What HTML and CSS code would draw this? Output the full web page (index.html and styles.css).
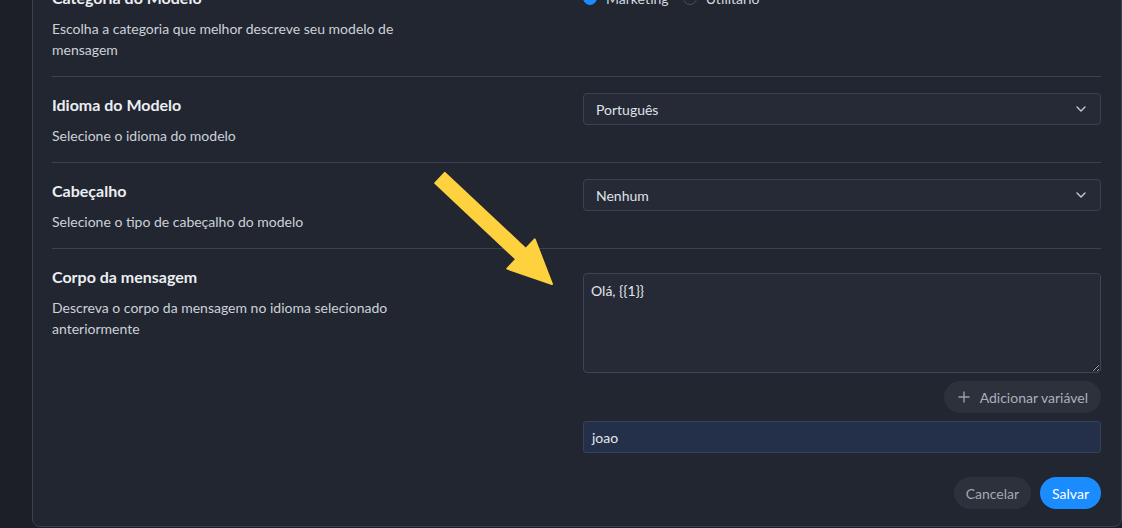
FILE: index.html
```html
<!DOCTYPE html>
<html lang="pt">
<head>
<meta charset="utf-8">
<link rel="stylesheet" href="styles.css">
</head>
<body>
<div class="page">
  <div class="card">
    <div class="row">
      <div class="info">
        <div class="title">Categoria do Modelo</div>
        <div class="desc">Escolha a categoria que melhor descreve seu modelo de mensagem</div>
      </div>
      <div class="field">
        <div class="radios">
          <label class="radio"><span class="dot checked"></span>Marketing</label>
          <label class="radio"><span class="dot"></span>Utilitário</label>
        </div>
      </div>
    </div>
    <div class="row">
      <div class="info">
        <div class="title">Idioma do Modelo</div>
        <div class="desc">Selecione o idioma do modelo</div>
      </div>
      <div class="field">
        <div class="select">Português
          <svg class="chev" width="10" height="6" viewBox="0 0 10 6"><path d="M1 1l4 4 4-4" fill="none" stroke="#c5c9d1" stroke-width="1.4" stroke-linecap="round" stroke-linejoin="round"/></svg>
        </div>
      </div>
    </div>
    <div class="row">
      <div class="info">
        <div class="title">Cabeçalho</div>
        <div class="desc">Selecione o tipo de cabeçalho do modelo</div>
      </div>
      <div class="field">
        <div class="select">Nenhum
          <svg class="chev" width="10" height="6" viewBox="0 0 10 6"><path d="M1 1l4 4 4-4" fill="none" stroke="#c5c9d1" stroke-width="1.4" stroke-linecap="round" stroke-linejoin="round"/></svg>
        </div>
      </div>
    </div>
    <div class="row last">
      <div class="info">
        <div class="title">Corpo da mensagem</div>
        <div class="desc">Descreva o corpo da mensagem no idioma selecionado anteriormente</div>
      </div>
      <div class="field body-field">
        <textarea class="textarea" readonly>Olá, {{1}}</textarea>
        <div class="add-row">
          <button class="pill add"><svg width="12" height="12" viewBox="0 0 12 12"><path d="M6 0.5v11M0.5 6h11" stroke="#9aa0ab" stroke-width="1.4"/></svg>Adicionar variável</button>
        </div>
        <div class="input">joao</div>
      </div>
    </div>
    <div class="actions">
      <button class="pill cancel">Cancelar</button>
      <button class="pill save">Salvar</button>
    </div>
  </div>
  <svg class="arrow" width="1122" height="528" viewBox="0 0 1122 528">
    <polygon points="444.8,172.9 525.8,248.9 534.7,239.4 552,284 507.3,268.6 516.2,259.1 435.2,183.1" fill="#fdd23e" stroke="#fdd23e" stroke-width="2" stroke-linejoin="round"/>
  </svg>
</div>
</body>
</html>
```
FILE: styles.css
```css
html, body {
  margin: 0;
  padding: 0;
  background: #1c1f26;
  overflow: hidden;
  height: 528px;
}
body {
  font-family: Lato, "Noto Sans", sans-serif;
  color: #e6e8ec;
}
.page {
  position: relative;
  display: flow-root;
  padding-left: 32px;
  height: 528px;
}
.card {
  margin-top: -39px;
  background: #212631;
  border: 1px solid #3a404d;
  border-radius: 8px;
  padding: 24px 20px 17px 19px;
}
.row {
  display: grid;
  grid-template-columns: 1fr 518px;
  padding: 16px 0;
  border-bottom: 1px solid #3b414e;
}
.row:first-child {
  padding-top: 0;
}
.row.last {
  border-bottom: none;
  padding-bottom: 0;
}
.title {
  font-size: 16px;
  font-weight: 700;
  line-height: 24px;
  color: #eceef2;
}
.desc {
  margin-top: 8px;
  font-size: 14px;
  line-height: 21px;
  color: #cdd1d8;
  max-width: 345px;
}
.radios {
  display: flex;
  gap: 14px;
  height: 24px;
  align-items: center;
}
.radio {
  display: flex;
  align-items: center;
  gap: 9px;
  font-size: 14px;
  color: #d6d9df;
}
.dot {
  width: 14px;
  height: 14px;
  border-radius: 50%;
  border: 1px solid #4a505d;
  box-sizing: border-box;
}
.dot.checked {
  background: #1b8cff;
  border-color: #1b8cff;
}
.select {
  height: 32px;
  box-sizing: border-box;
  border: 1px solid #3b4251;
  border-radius: 4px;
  background: #262a36;
  padding: 0 14px 0 12px;
  display: flex;
  align-items: center;
  justify-content: space-between;
  font-size: 14px;
  color: #dfe2e7;
}
.body-field {
  padding-top: 8px;
  display: flex;
  flex-direction: column;
}
.textarea {
  height: 100px;
  box-sizing: border-box;
  border: 1px solid #3e4453;
  border-radius: 4px;
  background: #262a36;
  color: #e2e5ea;
  font-family: Lato, "Noto Sans", sans-serif;
  font-size: 14px;
  line-height: 20px;
  padding: 7px 7px;
  margin: 0;
  outline: none;
  resize: vertical;
}
.add-row {
  display: flex;
  justify-content: flex-end;
  margin-top: 8px;
}
.pill {
  height: 32px;
  border: none;
  border-radius: 16px;
  font-family: Lato, "Noto Sans", sans-serif;
  font-size: 14px;
  padding: 0 12px;
  display: inline-flex;
  align-items: center;
}
.add {
  background: #2c313c;
  color: #aab0ba;
  gap: 10px;
  padding: 0 13px 0 14px;
}
.input {
  margin-top: 8px;
  height: 32px;
  box-sizing: border-box;
  border: 1px solid #354259;
  border-radius: 3px;
  background: #243049;
  color: #e4e7ec;
  font-size: 14px;
  display: flex;
  align-items: center;
  padding: 0 8px;
}
.actions {
  display: flex;
  justify-content: flex-end;
  gap: 9px;
  margin-top: 24px;
}
.cancel {
  background: #2c313c;
  color: #a3a9b3;
}
.save {
  background: #1b8cff;
  color: #ffffff;
}
.arrow {
  position: absolute;
  left: 0;
  top: 0;
  pointer-events: none;
}
```
